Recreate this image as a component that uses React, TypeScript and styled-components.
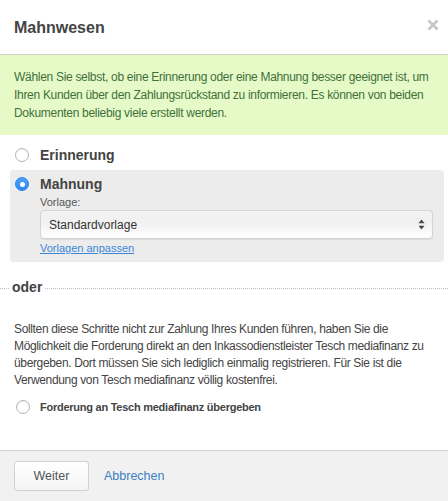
import React, { useState } from "react";
import styled, { createGlobalStyle } from "styled-components";

const GlobalStyle = createGlobalStyle`
  html, body {
    margin: 0;
    padding: 0;
    background: #fff;
  }
  #root {
    height: 100vh;
  }
  * {
    box-sizing: border-box;
  }
`;

const Dialog = styled.div`
  height: 100%;
  display: flex;
  flex-direction: column;
  font-family: "Liberation Sans", Arial, sans-serif;
  color: #444;
  background: #fff;
`;

const Header = styled.div`
  height: 55px;
  flex-shrink: 0;
  display: flex;
  align-items: center;
  justify-content: space-between;
  padding: 0 9px 0 14px;
  border-bottom: 1px solid #cfcfcf;
`;

const Title = styled.h1`
  margin: 1px 0 0;
  font-size: 16px;
  font-weight: bold;
  color: #444;
`;

const CloseButton = styled.button`
  border: 0;
  background: none;
  padding: 0;
  width: 12px;
  height: 12px;
  margin-bottom: 5px;
  display: flex;
  cursor: pointer;
`;

const Body = styled.div`
  flex: 1;
  display: flex;
  flex-direction: column;
`;

const Notice = styled.div`
  background: #e6fac8;
  color: #41703a;
  font-size: 12px;
  letter-spacing: -0.3px;
  line-height: 18px;
  padding: 13px 6px 13px 14px;
`;

const Choices = styled.div`
  padding: 5px 4px 0 10px;
  display: flex;
  flex-direction: column;
`;

const Option = styled.div<{ $active?: boolean }>`
  background: ${(p) => (p.$active ? "#ececec" : "transparent")};
  border-radius: 4px;
  padding: ${(p) => (p.$active ? "5px 11px 7px 5px" : "6px 11px 6px 5px")};
  display: grid;
  grid-template-columns: 14px 1fr;
  column-gap: 11px;
`;

const RadioLabel = styled.label`
  display: contents;
  cursor: pointer;
`;

const Radio = styled.span<{ $checked?: boolean; $size?: number }>`
  width: ${(p) => p.$size ?? 14}px;
  height: ${(p) => p.$size ?? 14}px;
  flex-shrink: 0;
  border-radius: 50%;
  align-self: center;
  display: flex;
  align-items: center;
  justify-content: center;
  background: ${(p) =>
    p.$checked ? "linear-gradient(#4fa3f7, #2b86f0)" : "#fff"};
  border: 1px solid ${(p) => (p.$checked ? "#2d86ee" : "#b4b4b4")};
  box-shadow: ${(p) => (p.$checked ? "none" : "inset 0 1px 1px rgba(0,0,0,0.05)")};

  &::after {
    content: "";
    display: ${(p) => (p.$checked ? "block" : "none")};
    width: 5px;
    height: 5px;
    border-radius: 50%;
    background: #fff;
  }
`;

const OptionTitle = styled.span`
  font-size: 14px;
  font-weight: bold;
  color: #444;
  line-height: 18px;
`;

const OptionDetails = styled.div`
  grid-column: 2;
  display: flex;
  flex-direction: column;
  padding-top: 2px;
`;

const FieldLabel = styled.div`
  font-size: 11px;
  color: #555;
  line-height: 14px;
  margin-bottom: 1px;
`;

const Select = styled.div`
  height: 29px;
  border: 1px solid #d3d3d3;
  border-radius: 4px;
  background: linear-gradient(#f3f3f3, #f0f0f0 40%, #fff);
  box-shadow: 0 1px 1px rgba(0, 0, 0, 0.08);
  display: flex;
  align-items: center;
  justify-content: space-between;
  padding: 0 7px 0 8px;
  font-size: 12px;
  color: #333;
`;

const TemplateLink = styled.a`
  font-size: 11px;
  color: #3a87d8;
  text-decoration: underline;
  margin-top: 2px;
  line-height: 14px;
  align-self: flex-start;
`;

const Divider = styled.div`
  display: flex;
  align-items: center;
  gap: 3px;
  margin-top: 17px;
  font-size: 14px;
  font-weight: bold;
  color: #444;

  &::before,
  &::after {
    content: "";
    border-top: 1px dotted #bdbdbd;
    margin-top: 2px;
  }
  &::before {
    width: 9px;
  }
  &::after {
    flex: 1;
  }
`;

const Paragraph = styled.p`
  margin: 26px 4px 0 14px;
  font-size: 12px;
  letter-spacing: -0.35px;
  line-height: 17px;
  color: #444;
`;

const SmallOption = styled.label`
  display: flex;
  align-items: center;
  gap: 10px;
  margin: 11px 0 0 16px;
  font-size: 11px;
  letter-spacing: -0.25px;
  font-weight: bold;
  color: #444;
  cursor: pointer;
`;

const Footer = styled.div`
  height: 51px;
  flex-shrink: 0;
  background: #f1f1f1;
  border-top: 1px solid #cfcfcf;
  display: flex;
  align-items: center;
  gap: 15px;
  padding: 0 14px;
`;

const Button = styled.button`
  height: 30px;
  width: 75px;
  border: 1px solid #d0d0d0;
  border-radius: 3px;
  background: linear-gradient(#ffffff, #f5f5f5);
  font-family: inherit;
  font-size: 12.5px;
  color: #555;
  cursor: pointer;
`;

const CancelLink = styled.a`
  font-size: 12.5px;
  color: #3a7fc2;
  text-decoration: none;
  cursor: pointer;
`;

const CloseIcon = () => (
  <svg width="12" height="12" viewBox="0 0 12 12">
    <path d="M1.5 1.5 L10.5 10.5 M10.5 1.5 L1.5 10.5" stroke="#c6c6c6" strokeWidth="2.6" />
  </svg>
);

const SelectArrows = () => (
  <svg width="7" height="11" viewBox="0 0 7 11">
    <path d="M3.5 0.5 L6.5 4.3 L0.5 4.3 Z" fill="#444" />
    <path d="M3.5 10.5 L6.5 6.7 L0.5 6.7 Z" fill="#444" />
  </svg>
);

export default function App() {
  const [choice, setChoice] = useState<"erinnerung" | "mahnung">("mahnung");
  const [handOver, setHandOver] = useState(false);

  return (
    <>
      <GlobalStyle />
      <Dialog>
        <Header>
          <Title>Mahnwesen</Title>
          <CloseButton aria-label="Schließen">
            <CloseIcon />
          </CloseButton>
        </Header>
        <Body>
          <Notice>
            Wählen Sie selbst, ob eine Erinnerung oder eine Mahnung besser geeignet ist, um
            Ihren Kunden über den Zahlungsrückstand zu informieren. Es können von beiden
            Dokumenten beliebig viele erstellt werden.
          </Notice>
          <Choices>
            <Option $active={choice === "erinnerung"}>
              <RadioLabel onClick={() => setChoice("erinnerung")}>
                <Radio $checked={choice === "erinnerung"} />
                <OptionTitle>Erinnerung</OptionTitle>
              </RadioLabel>
            </Option>
            <Option $active={choice === "mahnung"}>
              <RadioLabel onClick={() => setChoice("mahnung")}>
                <Radio $checked={choice === "mahnung"} />
                <OptionTitle>Mahnung</OptionTitle>
              </RadioLabel>
              {choice === "mahnung" && (
                <OptionDetails>
                  <FieldLabel>Vorlage:</FieldLabel>
                  <Select>
                    Standardvorlage
                    <SelectArrows />
                  </Select>
                  <TemplateLink href="#">Vorlagen anpassen</TemplateLink>
                </OptionDetails>
              )}
            </Option>
          </Choices>
          <Divider>oder</Divider>
          <Paragraph>
            Sollten diese Schritte nicht zur Zahlung Ihres Kunden führen, haben Sie die
            Möglichkeit die Forderung direkt an den Inkassodienstleister Tesch mediafinanz zu
            übergeben. Dort müssen Sie sich lediglich einmalig registrieren. Für Sie ist die
            Verwendung von Tesch mediafinanz völlig kostenfrei.
          </Paragraph>
          <SmallOption onClick={() => setHandOver(!handOver)}>
            <Radio $checked={handOver} $size={14} />
            Forderung an Tesch mediafinanz übergeben
          </SmallOption>
        </Body>
        <Footer>
          <Button>Weiter</Button>
          <CancelLink>Abbrechen</CancelLink>
        </Footer>
      </Dialog>
    </>
  );
}
